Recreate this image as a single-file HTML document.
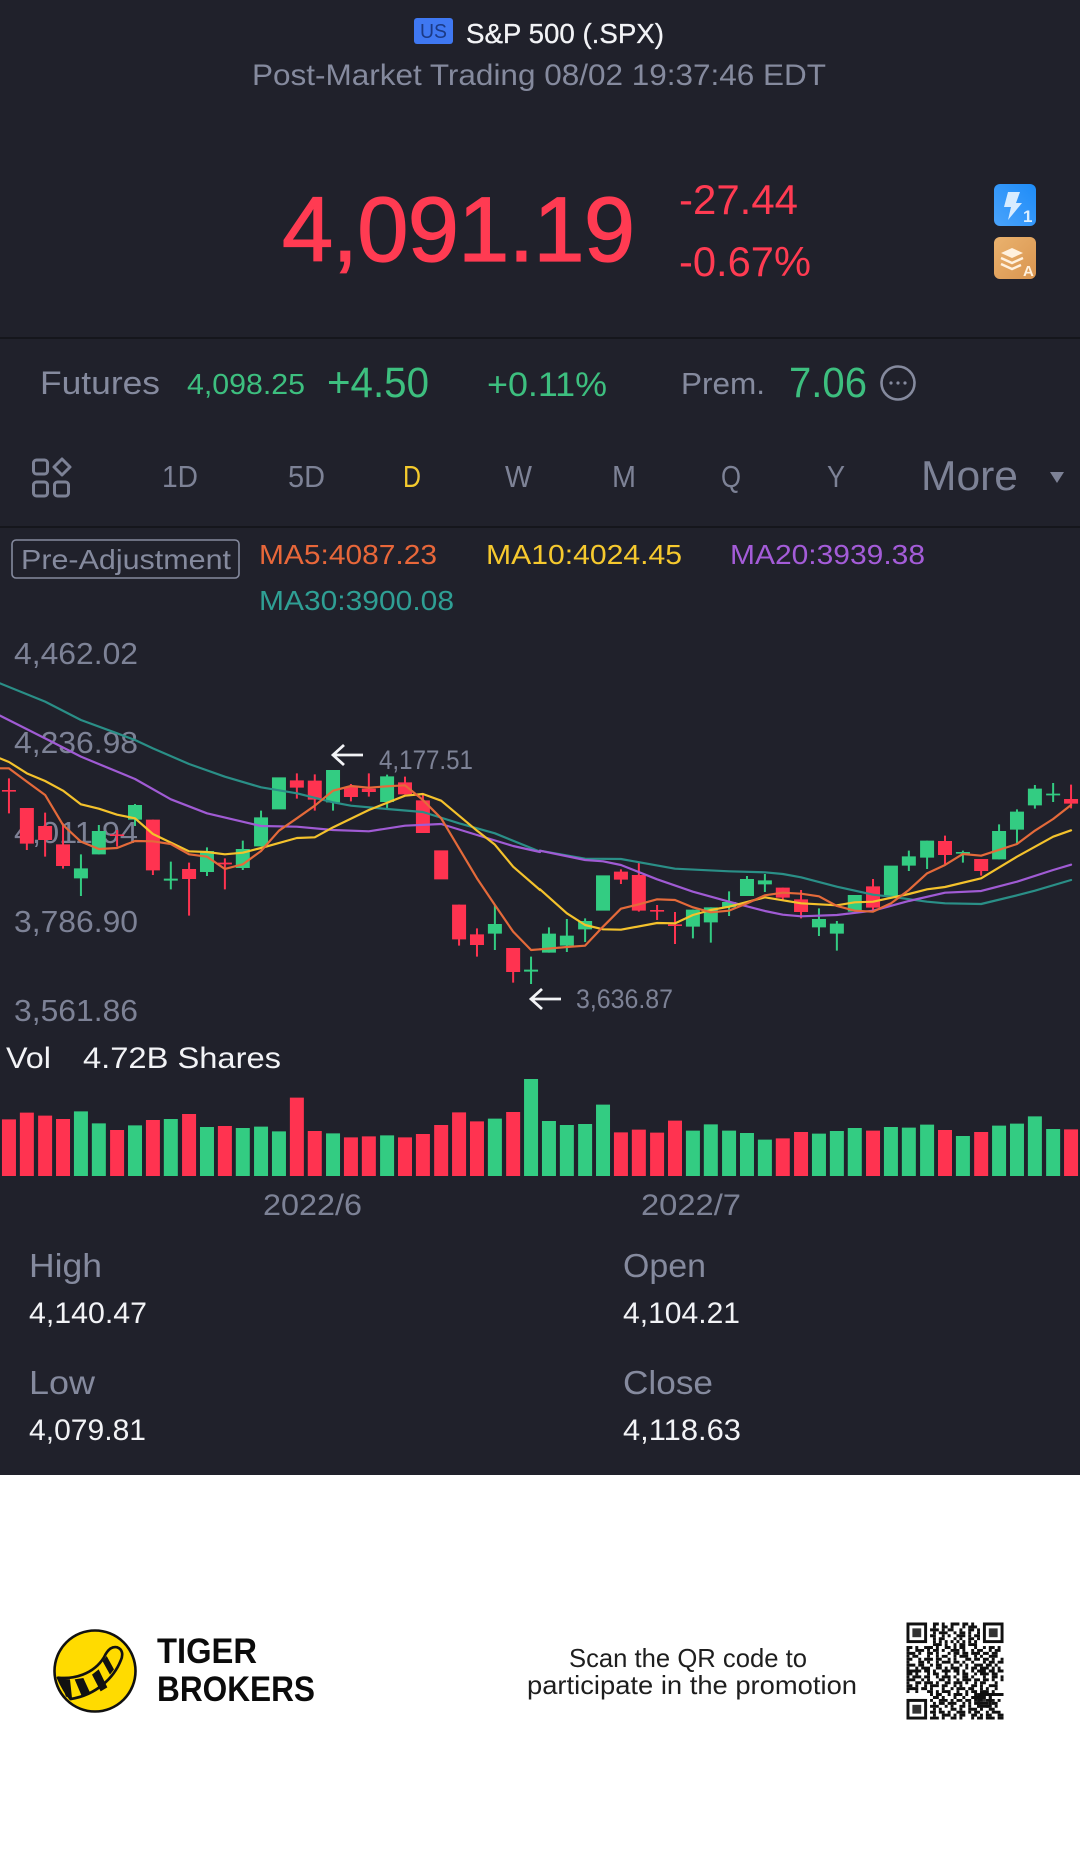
<!DOCTYPE html>
<html><head><meta charset="utf-8"><title>S&amp;P 500</title>
<style>
html,body{margin:0;padding:0;background:#20212b;width:1080px;height:1867px;overflow:hidden}
svg{display:block}
text{font-family:"Liberation Sans",Arial,sans-serif}
.g{fill:#858a9e}.w{fill:#f2f3f6}.up{fill:#3dbf7f}.dn{fill:#ff3b52}
.ns{vector-effect:non-scaling-stroke;fill:none}
.ma{vector-effect:non-scaling-stroke;fill:none;stroke-width:2.2;stroke-linejoin:round;stroke-linecap:round}
</style></head><body>
<svg width="1080" height="1867" viewBox="0 0 1080 1867" xmlns="http://www.w3.org/2000/svg">
<rect width="1080" height="1475" fill="#20212b"/>
<rect y="1475" width="1080" height="392" fill="#fff"/>
<!-- header -->
<rect x="414" y="18" width="39" height="26" rx="3" fill="#3f78f2"/>
<text x="420" y="38" font-size="20" fill="#1b3a86" textLength="27" lengthAdjust="spacingAndGlyphs">US</text>
<text x="466" y="43" font-size="28" class="w" stroke="#f2f3f6" stroke-width=".3" textLength="198" lengthAdjust="spacingAndGlyphs">S&amp;P 500 (.SPX)</text>
<text x="252" y="85" font-size="30" class="g" textLength="574" lengthAdjust="spacingAndGlyphs">Post-Market Trading 08/02 19:37:46 EDT</text>
<text x="282" y="261" font-size="92" class="dn" stroke="#ff3b52" stroke-width="1.2" textLength="353" lengthAdjust="spacing">4,091.19</text>
<text x="679" y="214" font-size="42" class="dn" textLength="119" lengthAdjust="spacingAndGlyphs">-27.44</text>
<text x="679" y="276" font-size="42" class="dn" textLength="132" lengthAdjust="spacingAndGlyphs">-0.67%</text>
<defs>
<linearGradient id="b" x1="1" y1="0" x2="0" y2="1"><stop offset="0" stop-color="#1e8cf8"/><stop offset="1" stop-color="#4aa3fb"/></linearGradient>
<linearGradient id="o" x1="0" y1="0" x2="1" y2="1"><stop offset="0" stop-color="#eab26e"/><stop offset="1" stop-color="#d99550"/></linearGradient>
</defs>
<rect x="994" y="184" width="42" height="42" rx="6" fill="url(#b)"/>
<path d="M1008 192h12l-4 11h6l-14 17 3-13h-7z" fill="#d8ecff"/>
<text x="1023" y="222" font-size="17" font-weight="bold" fill="#dcefff">1</text>
<rect x="994" y="237" width="42" height="42" rx="6" fill="url(#o)"/>
<path d="M1012 248l11 5-11 5-11-5z" fill="#fff1de"/>
<path d="M1001 258l11 5 11-5M1001 264l11 5 9-4" fill="none" stroke="#fff1de" stroke-width="2.4"/>
<text x="1023" y="276" font-size="15" font-weight="bold" fill="#fff1de">A</text>
<rect y="337" width="1080" height="2" fill="#15161c"/>
<!-- futures row -->
<text x="40" y="394" font-size="32" class="g" textLength="120" lengthAdjust="spacingAndGlyphs">Futures</text>
<text x="187" y="394" font-size="29" class="up" textLength="118" lengthAdjust="spacingAndGlyphs">4,098.25</text>
<text x="327" y="397" font-size="43" class="up" textLength="102" lengthAdjust="spacingAndGlyphs">+4.50</text>
<text x="487" y="396" font-size="34" class="up" textLength="120" lengthAdjust="spacingAndGlyphs">+0.11%</text>
<text x="681" y="394" font-size="31" class="g" textLength="84" lengthAdjust="spacingAndGlyphs">Prem.</text>
<text x="789" y="397" font-size="43" class="up" textLength="78" lengthAdjust="spacingAndGlyphs">7.06</text>
<circle cx="898" cy="383" r="16.5" fill="none" stroke="#858a9e" stroke-width="2.6"/>
<circle cx="891" cy="383" r="1.6" fill="#858a9e"/><circle cx="898" cy="383" r="1.6" fill="#858a9e"/><circle cx="905" cy="383" r="1.6" fill="#858a9e"/>
<!-- toolbar -->
<g fill="none" stroke="#7d8296" stroke-width="3">
<rect x="33.5" y="460" width="14" height="14" rx="3"/>
<rect x="33.5" y="482" width="14" height="14" rx="3"/>
<rect x="54.5" y="482" width="14" height="14" rx="3"/>
<path d="M62 459l8 8-8 8-8-8z" stroke-linejoin="round"/>
</g>
<g font-size="31">
<text x="162" y="487" fill="#7d8296" textLength="36" lengthAdjust="spacingAndGlyphs">1D</text>
<text x="288" y="487" fill="#7d8296" textLength="37" lengthAdjust="spacingAndGlyphs">5D</text>
<text x="403" y="487" fill="#f4ca2d" textLength="18" lengthAdjust="spacingAndGlyphs">D</text>
<text x="505" y="487" fill="#7d8296" textLength="27" lengthAdjust="spacingAndGlyphs">W</text>
<text x="612" y="487" fill="#7d8296" textLength="24" lengthAdjust="spacingAndGlyphs">M</text>
<text x="721" y="487" fill="#7d8296" textLength="20" lengthAdjust="spacingAndGlyphs">Q</text>
<text x="827" y="487" fill="#7d8296" textLength="18" lengthAdjust="spacingAndGlyphs">Y</text>
</g>
<text x="921" y="490" font-size="42" fill="#7d8296" textLength="97" lengthAdjust="spacingAndGlyphs">More</text>
<path d="M1050 472h14l-7 11z" fill="#7d8296"/>
<rect y="526" width="1080" height="2" fill="#15161c"/>
<!-- MA legend -->
<rect x="12" y="540" width="227" height="38" rx="4" fill="none" stroke="#858a9e" stroke-width="1.6"/>
<text x="21" y="569" font-size="28" class="g" textLength="210" lengthAdjust="spacingAndGlyphs">Pre-Adjustment</text>
<text x="259" y="564" font-size="28" fill="#e8673a" textLength="178" lengthAdjust="spacingAndGlyphs">MA5:4087.23</text>
<text x="486" y="564" font-size="28" fill="#f6c92e" textLength="196" lengthAdjust="spacingAndGlyphs">MA10:4024.45</text>
<text x="730" y="564" font-size="28" fill="#a45cd8" textLength="195" lengthAdjust="spacingAndGlyphs">MA20:3939.38</text>
<text x="259" y="610" font-size="28" fill="#2f9f94" textLength="195" lengthAdjust="spacingAndGlyphs">MA30:3900.08</text>
<!-- axis -->
<g font-size="31" fill="#7d8296">
<text x="14" y="664" textLength="124" lengthAdjust="spacingAndGlyphs">4,462.02</text>
<text x="14" y="753" textLength="124" lengthAdjust="spacingAndGlyphs">4,236.98</text>
<text x="14" y="843" textLength="124" lengthAdjust="spacingAndGlyphs">4,011.94</text>
<text x="14" y="932" textLength="124" lengthAdjust="spacingAndGlyphs">3,786.90</text>
<text x="14" y="1021" textLength="124" lengthAdjust="spacingAndGlyphs">3,561.86</text>
</g>
<!-- left chart -->
<g transform="translate(0 640) scale(.34439 .33333)">
<path class="ns" stroke="#33cc82" stroke-width="2" d="M235 643V768M287 555V643M392 492V558M496 665V748M601 622V708M705 602V690M758 512V619M967 390V512M1124 404V505M1437 795V930M1542 950V1032"/>
<path class="ns" stroke="#ff3350" stroke-width="2" d="M26 415V520M78 504V630M131 518V650M183 550V686M340 570V620M444 539V705M549 668V827M653 655V748M862 400V476M914 403V512M1019 432V484M1071 400V470M1176 410V463M1228 460V579M1333 794V917M1385 865V950M1490 924V1028"/>
<path class="ns" stroke="#33cc82" stroke-width="14" d="M235 685V715M287 573V643M392 495V539M496 716V722M601 633V696M705 627V684M758 532V619M810 412V508M967 390V487M1124 409V486M1437 852V881M1542 989V995"/>
<path class="ns" stroke="#ff3350" stroke-width="14" d="M26 450V455M78 504V611M131 558V600M183 613V678M340 583V588M444 539V691M549 687V717M653 668V673M862 421V443M914 422V479M1019 441V471M1071 446V456M1176 427V463M1228 481V579M1281 631V718M1333 794V898M1385 883V915M1490 924V996"/>
<polyline class="ma" stroke="#2a8f87" points="0,130 131,185 235,240 340,280 392,300 444,325 549,372 653,410 758,442 862,460 967,487 1019,497 1124,507 1228,516 1333,550 1437,580 1568,635"/>
<polyline class="ma" stroke="#a05bd4" points="0,227 131,295 235,350 392,417 496,478 601,520 758,558 862,560 967,570 1071,574 1176,557 1281,552 1385,585 1490,618 1568,636"/>
<polyline class="ma" stroke="#f4c22c" points="0,355 26,366 78,400 131,423 183,452 235,493 287,506 340,524 392,535 444,582 549,634 601,636 653,643 705,638 758,624 862,594 914,592 967,562 1071,510 1176,467 1228,462 1281,482 1385,572 1437,614 1490,680 1568,750"/>
<polyline class="ma" stroke="#e46a3a" points="0,385 26,385 78,425 131,465 183,555 235,605 287,627 340,624 392,603 444,604 496,612 549,643 601,650 653,687 705,673 758,633 810,572 862,535 914,497 967,452 1019,438 1071,443 1124,439 1176,436 1228,480 1281,535 1385,715 1437,795 1490,875 1542,930 1568,928"/>
</g>
<!-- right chart -->
<g transform="translate(540 640) scale(.34439 .33333)">
<path class="ns" stroke="#33cc82" stroke-width="2" d="M26 862V938M78 837V936M131 835V906M444 809V895M496 802V908M549 754V828M601 708V768M653 702V756M810 805V888M862 843V932M1071 632V693M1124 602V687M1228 632V668M1333 553V658M1385 508V610M1437 435V506M1490 429V486"/>
<path class="ns" stroke="#ff3350" stroke-width="2" d="M235 688V732M287 668V815M340 795V840M392 816V912M705 743V780M758 750V835M967 717V815M1176 587V672M1281 657V707M1542 434V505"/>
<path class="ns" stroke="#33cc82" stroke-width="14" d="M26 881V938M78 887V917M131 843V868M183 706V812M444 809V860M496 802V847M549 786V802M601 717V768M653 721V733M810 837V862M862 851V881M914 765V815M1019 677V770M1071 649V677M1124 602V653M1228 636V641M1333 573V658M1385 515V569M1437 446V496M1490 461V466"/>
<path class="ns" stroke="#ff3350" stroke-width="14" d="M235 695V719M287 705V812M340 810V815M392 853V858M705 743V773M758 778V816M967 739V803M1176 603V645M1281 657V693M1542 477V491"/>
<polyline class="ma" stroke="#2a8f87" points="0,632 131,656 235,657 392,686 549,694 653,697 705,702 758,712 862,740 967,764 1019,770 1124,785 1176,790 1281,792 1385,766 1437,752 1542,720"/>
<polyline class="ma" stroke="#a05bd4" points="0,632 131,660 183,664 235,675 340,718 444,755 549,785 653,813 705,824 758,829 862,825 967,812 1071,783 1176,758 1281,753 1385,725 1490,690 1542,674"/>
<polyline class="ma" stroke="#f4c22c" points="0,748 78,820 131,855 183,868 235,869 340,849 392,850 444,825 496,810 549,800 653,772 758,790 862,796 914,787 967,785 1071,762 1124,748 1176,741 1281,715 1385,650 1490,590 1542,571"/>
<polyline class="ma" stroke="#e46a3a" points="0,928 78,921 131,917 183,860 235,806 287,793 340,778 392,780 444,802 496,817 549,812 601,790 653,766 705,758 758,761 810,769 862,798 914,812 967,815 1019,790 1071,750 1124,700 1176,675 1228,642 1281,647 1385,612 1437,572 1490,537 1542,495"/>
</g>
<!-- hi/lo arrows -->
<path d="M363 755H334M344 745L333 755L344 765" fill="none" stroke="#f2f3f6" stroke-width="2.8"/>
<text x="379" y="769" font-size="27" fill="#7d8296" textLength="94" lengthAdjust="spacingAndGlyphs">4,177.51</text>
<path d="M561 999H532M542 989L531 999L542 1009" fill="none" stroke="#f2f3f6" stroke-width="2.8"/>
<text x="576" y="1008" font-size="27" fill="#7d8296" textLength="97" lengthAdjust="spacingAndGlyphs">3,636.87</text>
<!-- volume -->
<text x="6" y="1068" font-size="30" class="w" textLength="45" lengthAdjust="spacingAndGlyphs">Vol</text>
<text x="83" y="1068" font-size="30" class="w" textLength="198" lengthAdjust="spacingAndGlyphs">4.72B Shares</text>
<g transform="translate(0 1060) scale(.34439 .33333)">
<path class="ns" stroke="#ff3350" stroke-width="14" d="M26 178V348M78 158V348M131 167V348M183 177V348M340 210V348M444 180V348M549 162V348M653 198V348M862 113V348M914 213V348M1019 232V348M1071 229V348M1176 232V348M1228 222V348M1281 195V348M1333 157V348M1385 184V348M1490 156V348"/>
<path class="ns" stroke="#33cc82" stroke-width="14" d="M235 154V348M287 190V348M392 196V348M496 177V348M601 201V348M705 204V348M758 200V348M810 214V348M967 220V348M1124 226V348M1437 176V348M1542 57V348"/>
</g>
<g transform="translate(540 1060) scale(.34439 .33333)">
<path class="ns" stroke="#33cc82" stroke-width="14" d="M26 183V348M78 195V348M131 192V348M183 134V348M444 212V348M496 193V348M549 212V348M601 219V348M653 239V348M810 221V348M862 213V348M914 204V348M1019 201V348M1071 203V348M1124 194V348M1228 228V348M1333 197V348M1385 191V348M1437 169V348M1490 207V348"/>
<path class="ns" stroke="#ff3350" stroke-width="14" d="M235 217V348M287 209V348M340 218V348M392 182V348M705 235V348M758 216V348M967 212V348M1176 210V348M1281 216V348M1542 208V348"/>
</g>
<text x="263" y="1215" font-size="30" fill="#7d8296" textLength="99" lengthAdjust="spacingAndGlyphs">2022/6</text>
<text x="641" y="1215" font-size="30" fill="#7d8296" textLength="100" lengthAdjust="spacingAndGlyphs">2022/7</text>
<!-- OHLC -->
<text x="29" y="1277" font-size="33" class="g" textLength="73" lengthAdjust="spacingAndGlyphs">High</text>
<text x="29" y="1323" font-size="30" class="w" textLength="118" lengthAdjust="spacingAndGlyphs">4,140.47</text>
<text x="623" y="1277" font-size="33" class="g" textLength="83" lengthAdjust="spacingAndGlyphs">Open</text>
<text x="623" y="1323" font-size="30" class="w" textLength="117" lengthAdjust="spacingAndGlyphs">4,104.21</text>
<text x="29" y="1394" font-size="33" class="g" textLength="66" lengthAdjust="spacingAndGlyphs">Low</text>
<text x="29" y="1440" font-size="30" class="w" textLength="117" lengthAdjust="spacingAndGlyphs">4,079.81</text>
<text x="623" y="1394" font-size="33" class="g" textLength="90" lengthAdjust="spacingAndGlyphs">Close</text>
<text x="623" y="1440" font-size="30" class="w" textLength="118" lengthAdjust="spacingAndGlyphs">4,118.63</text>
<!-- logo -->
<circle cx="95" cy="1671" r="40.5" fill="#ffdb00" stroke="#111" stroke-width="2.6"/>
<g transform="translate(30 1600) scale(.33333)">
<path d="M84 233C130 238 190 224 222 172C232 150 245 138 262 142C278 148 280 165 272 182C252 232 200 285 122 297C112 285 96 260 84 233Z" fill="#ffdb00" stroke="#111" stroke-width="8" stroke-linejoin="round"/>
<path d="M88 236L120 238L126 294L108 290ZM134 238L160 234L182 282L156 290ZM186 224L206 208L232 262L212 274ZM218 184L230 168L252 208L240 224Z" fill="#111"/>
</g>
<text x="157" y="1663" font-size="35" font-weight="bold" fill="#0b0b0b" textLength="100" lengthAdjust="spacingAndGlyphs">TIGER</text>
<text x="157" y="1701" font-size="35" font-weight="bold" fill="#0b0b0b" textLength="158" lengthAdjust="spacingAndGlyphs">BROKERS</text>
<text x="569" y="1667" font-size="26" fill="#1e1e1e" textLength="238" lengthAdjust="spacingAndGlyphs">Scan the QR code to</text>
<text x="527" y="1694" font-size="26" fill="#1e1e1e" textLength="330" lengthAdjust="spacingAndGlyphs">participate in the promotion</text>
<!-- QR -->
<g transform="translate(906.5 1622.5) scale(2.94)" fill="none" stroke="#111" stroke-width="1">
<path d="M0 .5H33" stroke-dasharray="0 9 2 1 1 2 3 1 2 1 1 2 1 1 2 9"/>
<path d="M0 1.5H33" stroke-dasharray="0 9 1 2 2 1 1 3 1 1 3 2 1 6"/>
<path d="M0 2.5H33" stroke-dasharray="0 8 3 1 1 1 2 2 1 2 2 1 1 1 2 9"/>
<path d="M0 3.5H33" stroke-dasharray="0 9 1 1 3 2 1 1 2 1 1 2 2 1 1 9"/>
<path d="M0 4.5H33" stroke-dasharray="0 8 2 2 1 1 1 2 3 1 1 1 2 1 2 9"/>
<path d="M0 5.5H33" stroke-dasharray="0 9 1 1 2 3 1 1 1 2 2 1 1 2 2 9"/>
<path d="M0 6.5H33" stroke-dasharray="0 9 1 1 1 1 1 1 1 1 1 1 1 1 1 1 1 9"/>
<path d="M0 7.5H33" stroke-dasharray="0 9 3 1 1 2 1 1 2 1 3 9"/>
<path d="M0 8.5H33" stroke-dasharray="2 1 1 2 3 1 1 2 2 1 1 1 2 3 1 2 1 1 2 1 1 1"/>
<path d="M0 9.5H33" stroke-dasharray="1 2 3 1 1 1 2 1 1 2 3 1 1 2 1 1 2 2 1 1 2 1"/>
<path d="M0 10.5H33" stroke-dasharray="3 1 1 2 2 1 1 3 1 1 2 1 2 1 3 1 2 1 2 2"/>
<path d="M0 11.5H33" stroke-dasharray="1 1 2 3 1 2 1 1 2 2 1 1 3 2 1 1 1 2 3 2"/>
<path d="M0 12.5H33" stroke-dasharray="2 2 1 1 3 1 2 2 1 1 1 3 2 1 2 1 2 1 1 2 1 1"/>
<path d="M0 13.5H33" stroke-dasharray="1 3 2 1 1 2 1 1 3 1 2 1 1 2 1 3 1 1 2 1 2"/>
<path d="M0 14.5H33" stroke-dasharray="3 1 2 2 1 1 2 3 1 2 1 1 1 2 3 1 2 1 1 2"/>
<path d="M0 15.5H33" stroke-dasharray="1 2 1 1 3 2 2 1 1 1 3 2 1 1 2 1 3 1 1 1 1 1"/>
<path d="M0 16.5H33" stroke-dasharray="5 1 2 1 1 2 3 1 2 1 1 2 1 1 3 1 2 1 3"/>
<path d="M0 17.5H33" stroke-dasharray="2 1 1 3 1 1 2 2 1 3 1 1 2 2 1 1 3 1 2 2"/>
<path d="M0 18.5H33" stroke-dasharray="1 1 3 1 2 2 1 1 3 1 1 2 2 1 1 3 1 2 2 1 1"/>
<path d="M0 19.5H33" stroke-dasharray="3 2 1 1 1 3 2 1 1 2 1 1 3 1 2 1 2 1 1 2 1"/>
<path d="M0 20.5H33" stroke-dasharray="1 2 2 1 3 1 1 2 2 1 3 1 1 2 1 1 2 3 1 2 1"/>
<path d="M0 21.5H33" stroke-dasharray="2 1 1 2 1 1 3 1 2 2 1 1 1 3 2 1 1 2 3 2"/>
<path d="M0 22.5H33" stroke-dasharray="4 1 2 1 1 3 1 2 1 1 3 1 2 2 1 1 1 2 1 2"/>
<path d="M0 23.5H33" stroke-dasharray="1 2 1 3 2 1 1 1 3 2 1 2 1 1 2 1 3 1 1 3"/>
<path d="M0 24.5H33" stroke-dasharray="0 8 1 1 2 2 1 1 3 1 1 2 1 1 8"/>
<path d="M0 25.5H33" stroke-dasharray="0 9 2 1 1 3 1 2 1 2 5 1 1 4"/>
<path d="M0 26.5H33" stroke-dasharray="0 8 1 2 3 1 1 1 2 1 2 1 1 1 1 1 3 1 1 1"/>
<path d="M0 27.5H33" stroke-dasharray="0 9 1 1 2 1 3 2 1 1 1 1 5 1 2 2"/>
<path d="M0 28.5H33" stroke-dasharray="0 8 3 2 1 1 1 2 2 1 1 2 2 1 1 2 1 1"/>
<path d="M0 29.5H33" stroke-dasharray="0 9 1 1 1 3 2 1 1 2 3 1 1 2 2 2"/>
<path d="M0 30.5H33" stroke-dasharray="0 8 2 1 2 1 1 2 3 1 1 1 2 2 1 1 3 1"/>
<path d="M0 31.5H33" stroke-dasharray="0 9 1 2 3 1 1 1 2 2 2 1 1 1 2 2 2"/>
<path d="M0 32.5H33" stroke-dasharray="0 8 3 1 1 2 2 1 1 3 1 1 2 1 3 1 2"/>
<g stroke="none">
<rect width="8" height="8" fill="#fff"/><rect x="25" width="8" height="8" fill="#fff"/><rect y="25" width="8" height="8" fill="#fff"/>
</g>
<g stroke-width="1">
<rect x=".5" y=".5" width="6" height="6"/><rect x="26.5" y=".5" width="6" height="6"/><rect x=".5" y="26.5" width="6" height="6"/>
<rect x="24.5" y="24.5" width="4" height="4"/>
</g>
<g fill="#333" stroke="none">
<rect x="2" y="2" width="3" height="3"/><rect x="28" y="2" width="3" height="3"/><rect x="2" y="28" width="3" height="3"/><rect x="26" y="26" width="1" height="1"/>
</g>
</g>
</svg>
</body></html>
